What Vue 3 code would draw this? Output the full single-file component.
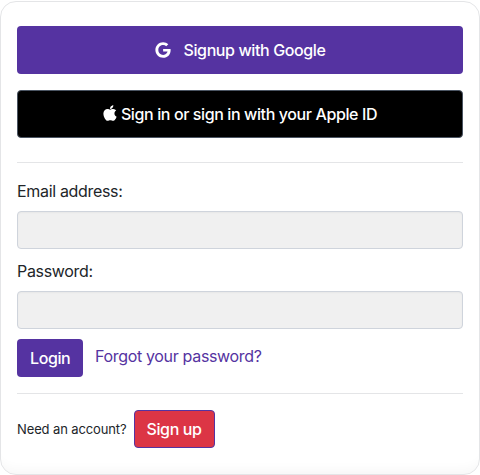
<template>
  <div class="login-card">
    <button class="btn btn-wide btn-google">
      <svg class="icon-google" viewBox="0 0 488 512" aria-hidden="true">
        <path fill="currentColor" d="M488 261.8C488 403.3 391.1 504 248 504 110.8 504 0 393.2 0 256S110.8 8 248 8c66.8 0 123 24.5 166.3 64.9l-67.5 64.9C258.5 52.6 94.3 116.6 94.3 256c0 86.5 69.1 156.6 153.7 156.6 98.2 0 135-70.4 140.8-106.9H248v-85.3h236.1c2.3 12.7 3.9 24.9 3.9 41.4z" />
      </svg>
      <span>Signup with Google</span>
    </button>
    <button class="btn btn-wide btn-apple">
      <svg class="icon-apple" viewBox="0 0 384 512" aria-hidden="true">
        <path fill="currentColor" d="M318.7 268.7c-.2-36.7 16.4-64.4 50-84.8-18.8-26.9-47.2-41.7-84.7-44.6-35.5-2.8-74.3 20.7-88.5 20.7-15 0-49.4-19.7-76.4-19.7C63.3 141.2 4 184.8 4 273.5q0 39.3 14.4 81.2c12.8 36.7 59 126.7 107.2 125.2 25.2-.6 43-17.9 75.8-17.9 31.8 0 48.3 17.9 76.4 17.9 48.6-.7 90.4-82.5 102.6-119.3-65.2-30.7-61.7-90-61.7-91.9zm-56.6-164.2c27.3-32.4 24.8-61.9 24-72.5-24.1 1.4-52 16.4-67.9 34.9-17.5 19.8-27.8 44.3-25.6 71.9 26.1 2 49.9-11.4 69.5-34.3z" />
      </svg>
      <span>Sign in or sign in with your Apple ID</span>
    </button>

    <hr class="divider divider-top" />

    <form class="login-form" @submit.prevent>
      <label class="field-label" for="email">Email address:</label>
      <input id="email" v-model="email" class="field-input" type="email" />
      <label class="field-label" for="password">Password:</label>
      <input id="password" v-model="password" class="field-input" type="password" />
      <div class="form-actions">
        <button class="btn btn-login" type="submit">Login</button>
        <a class="forgot-link" href="#">Forgot your password?</a>
      </div>
    </form>

    <hr class="divider divider-bottom" />

    <div class="signup-row">
      <small class="signup-text">Need an account?</small>
      <button class="btn btn-signup">Sign up</button>
    </div>
  </div>
</template>

<script setup>
import { ref } from 'vue'

const email = ref('')
const password = ref('')
</script>

<style>
html, body { margin: 0; background: #fff; }
</style>

<style scoped>
.login-card { box-sizing: border-box; width: 480px; height: 474px; margin-top: 1px; padding: 24px 16px 0; border: 1px solid #e4e5e7; border-radius: 16px; background: #fff; box-shadow: inset 0 -14px 12px -10px rgba(0, 0, 0, 0.035); font-family: Inter, "Noto Sans", sans-serif; color: #212529; font-size: 16px; letter-spacing: -0.33px; line-height: 24px; display: flex; flex-direction: column; }
.btn { box-sizing: border-box; border: 1px solid transparent; border-radius: 4px; font: inherit; font-weight: 450; letter-spacing: -0.39px; color: #fff; cursor: pointer; padding: 6px 12px; white-space: nowrap; }
.btn-wide { width: 446px; height: 48px; flex: none; display: flex; align-items: center; justify-content: center; }
.btn-google { background: #5533a1; }
.btn-apple { margin-top: 16px; background: #000; border-color: #4b5563; }
.icon-google { width: 16px; height: 16px; margin-right: 13px; margin-top: -1px; }
.icon-apple { width: 14px; height: 18px; margin-right: 4px; margin-top: -3px; }
.divider { width: 446px; margin: 0; border: none; border-top: 1px solid #e4e5e7; flex: none; }
.divider-top { margin-top: 24px; }
.divider-bottom { margin-top: 16px; }
.login-form { display: flex; flex-direction: column; margin-top: 16px; }
.field-label { margin-bottom: 8px; }
.field-input { box-sizing: border-box; width: 446px; height: 38px; margin-bottom: 10px; border: 1px solid #cfd4dc; border-radius: 4px; background: #f0f0f0; box-shadow: inset 0 1px 2px rgba(0, 0, 0, 0.04); outline: none; }
.form-actions { display: flex; align-items: flex-start; gap: 12px; }
.btn-login { width: 66px; height: 38px; background: #5533a1; }
.forgot-link { color: #5533a1; text-decoration: none; margin-top: 5px; }
.signup-row { display: flex; align-items: center; gap: 7px; margin-top: 16px; }
.signup-text { font-size: 13px; letter-spacing: -0.12px; line-height: 20px; }
.btn-signup { width: 81px; height: 38px; background: #dc3545; border-color: #5533a1; }
</style>
